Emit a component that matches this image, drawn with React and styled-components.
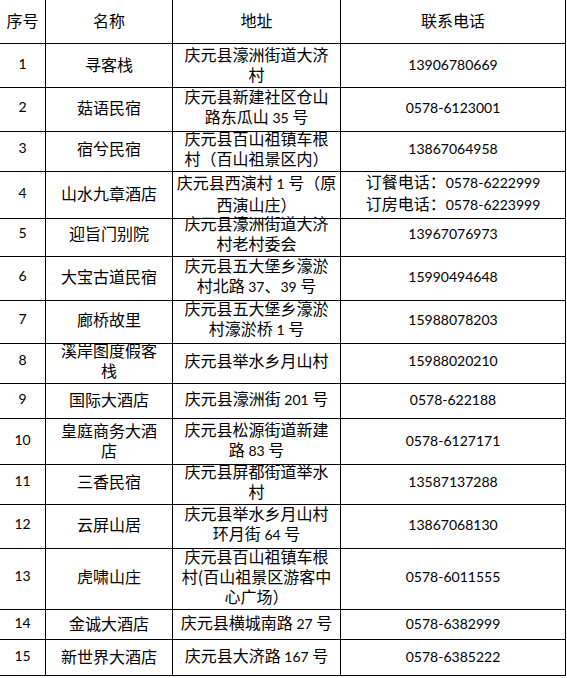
import React from 'react';
import styled, { createGlobalStyle } from 'styled-components';

const GlobalStyle = createGlobalStyle`
    html, body {
        margin: 0;
        padding: 0;
        background: #fff;
        overflow: hidden;
    }
    body {
        font-family: 'Noto Sans CJK SC', 'Noto Sans', sans-serif;
        font-size: 16px;
        color: #000;
    }
`;

const COLUMNS = '46px 127px 168px 225px';

const Sheet = styled.div`
    width: max-content;
    margin: -1px 0 0 -1px;
    border-left: 1px solid #000;
    border-top: 1px solid #000;
`;

const Row = styled.div`
    display: grid;
    grid-template-columns: ${COLUMNS};
    height: ${p => p.$h}px;
`;

const Cell = styled.div`
    box-sizing: border-box;
    display: flex;
    flex-direction: column;
    align-items: center;
    justify-content: center;
    padding-bottom: 3px;
    text-align: center;
    border-right: 1px solid #000;
    border-bottom: 1px solid #000;
    line-height: 20px;
    white-space: nowrap;
    overflow: visible;
`;

const Line = styled.span`
    display: block;
`;

const Num = styled.span`
    font-family: 'Lato', 'Open Sans', sans-serif;
    font-size: 14px;
`;

const hotels = [
    { h: 42, name: ['寻客栈'], addr: ['庆元县濠洲街道大济', '村'], tel: ['13906780669'] },
    { h: 42, name: ['菇语民宿'], addr: ['庆元县新建社区仓山', '路东瓜山 35 号'], tel: ['0578-6123001'] },
    { h: 43, name: ['宿兮民宿'], addr: ['庆元县百山祖镇车根', '村（百山祖景区内）'], tel: ['13867064958'] },
    { h: 42, name: ['山水九章酒店'], addr: ['庆元县西演村 1 号（原', '西演山庄）'], tel: ['订餐电话：0578-6222999', '订房电话：0578-6223999'] },
    { h: 42, name: ['迎旨门别院'], addr: ['庆元县濠洲街道大济', '村老村委会'], tel: ['13967076973'] },
    { h: 43, name: ['大宝古道民宿'], addr: ['庆元县五大堡乡濠淤', '村北路 37、39 号'], tel: ['15990494648'] },
    { h: 42, name: ['廊桥故里'], addr: ['庆元县五大堡乡濠淤', '村濠淤桥 1 号'], tel: ['15988078203'] },
    { h: 42, name: ['溪岸图度假客', '栈'], addr: ['庆元县举水乡月山村'], tel: ['15988020210'] },
    { h: 37, name: ['国际大酒店'], addr: ['庆元县濠洲街 201 号'], tel: ['0578-622188'] },
    { h: 42, name: ['皇庭商务大酒', '店'], addr: ['庆元县松源街道新建', '路 83 号'], tel: ['0578-6127171'] },
    { h: 42, name: ['三香民宿'], addr: ['庆元县屏都街道举水', '村'], tel: ['13587137288'] },
    { h: 43, name: ['云屏山居'], addr: ['庆元县举水乡月山村', '环月街 64 号'], tel: ['13867068130'] },
    { h: 63, name: ['虎啸山庄'], addr: ['庆元县百山祖镇车根', '村(百山祖景区游客中', '心广场）'], tel: ['0578-6011555'] },
    { h: 31, name: ['金诚大酒店'], addr: ['庆元县横城南路 27 号'], tel: ['0578-6382999'] },
    { h: 36, name: ['新世界大酒店'], addr: ['庆元县大济路 167 号'], tel: ['0578-6385222'] },
];

// digits and phone numbers are set in a narrower latin face, as in the sheet
function withNumbers(text) {
    return text.split(/(\d[\d-]*)/).map((part, i) =>
        /^\d/.test(part) ? <Num key={i}>{part}</Num> : part
    );
}

function Lines({ lines }) {
    return lines.map((l, i) => <Line key={i}>{withNumbers(l)}</Line>);
}

export default function App() {
    return (
        <>
            <GlobalStyle />
            <Sheet>
                <Row $h={44}>
                    <Cell>序号</Cell>
                    <Cell>名称</Cell>
                    <Cell>地址</Cell>
                    <Cell>联系电话</Cell>
                </Row>
                {hotels.map((r, i) => (
                    <Row key={i} $h={r.h}>
                        <Cell><Num>{i + 1}</Num></Cell>
                        <Cell><Lines lines={r.name} /></Cell>
                        <Cell><Lines lines={r.addr} /></Cell>
                        <Cell><Lines lines={r.tel} /></Cell>
                    </Row>
                ))}
            </Sheet>
        </>
    );
}
